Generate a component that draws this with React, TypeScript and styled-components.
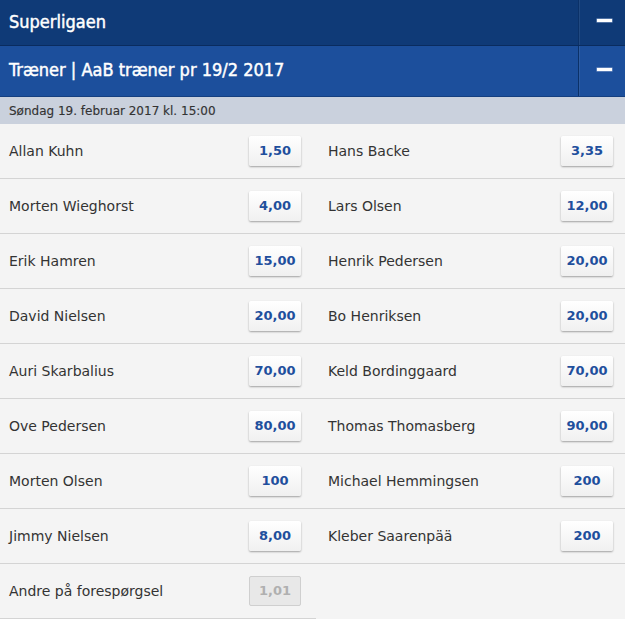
import React from "react";
import styled, { createGlobalStyle } from "styled-components";

const GlobalStyle = createGlobalStyle`
  html, body {
    margin: 0;
    padding: 0;
    background: #f4f4f4;
  }
  * {
    box-sizing: border-box;
  }
`;

const Page = styled.div`
  width: 625px;
  font-family: "DejaVu Sans", Verdana, sans-serif;
  color: #333;
`;

const Header = styled.div<{ $level: number }>`
  display: flex;
  align-items: stretch;
  height: ${(p) => (p.$level === 1 ? "46px" : "51px")};
  background: ${(p) => (p.$level === 1 ? "#0f3a77" : "#1c4f9c")};
  border-bottom: 1px solid ${(p) => (p.$level === 1 ? "#0a2c5f" : "#143f80")};
`;

const HeaderTitle = styled.div<{ $level: number }>`
  flex: 1;
  display: flex;
  align-items: center;
  padding: 0 0 ${(p) => (p.$level === 1 ? "2px" : "4px")} 9px;
  font-family: "DejaVu Sans Condensed", "DejaVu Sans", sans-serif;
  font-size: 18px;
  color: #fff;
  -webkit-text-stroke: 0.45px #fff;
`;

const Toggle = styled.div`
  width: 47px;
  display: flex;
  align-items: center;
  justify-content: center;
  padding-left: 4px;
  padding-bottom: 4px;
  border-left: 1px solid #0b3168;
  box-shadow: inset 1px 0 0 rgba(255, 255, 255, 0.08);
`;

const Minus = styled.span`
  display: block;
  width: 15px;
  height: 3px;
  background: #fff;
  box-shadow: 0 0 0 0.5px #8fa8d0;
`;

const DateBar = styled.div`
  height: 27px;
  display: flex;
  align-items: center;
  padding-left: 9px;
  background: #cad1dd;
  font-size: 12px;
  color: #333;
  -webkit-text-stroke: 0.15px #333;
`;

const Grid = styled.div`
  display: grid;
  grid-template-columns: 316px 309px;
`;

const Cell = styled.div<{ $side: "left" | "right" }>`
  height: 55px;
  display: flex;
  align-items: center;
  justify-content: space-between;
  padding: 0 ${(p) => (p.$side === "left" ? "15px 0 9px" : "12px 0 12px")};
  border-bottom: 1px solid #d4d4d4;
  background: #f4f4f4;
`;

const Name = styled.span`
  font-size: 14px;
  color: #333;
  padding-bottom: 1px;
`;

const Odds = styled.button<{ $disabled?: boolean }>`
  width: 52px;
  height: 30px;
  margin-bottom: 1px;
  padding: 0;
  font-family: "DejaVu Sans", Verdana, sans-serif;
  font-weight: bold;
  font-size: 13px;
  border-radius: 2px;
  cursor: pointer;
  color: ${(p) => (p.$disabled ? "#b0b0b0" : "#1f4f9d")};
  background: ${(p) =>
    p.$disabled ? "#e8e8e8" : "linear-gradient(#ffffff, #f0f0f0)"};
  border: ${(p) => (p.$disabled ? "1px solid #cfcfcf" : "none")};
  box-shadow: ${(p) =>
    p.$disabled ? "none" : "0 1px 2px rgba(0, 0, 0, 0.35)"};
`;

type Pick = { name: string; odds: string; disabled?: boolean };

const picks: Pick[] = [
  { name: "Allan Kuhn", odds: "1,50" },
  { name: "Hans Backe", odds: "3,35" },
  { name: "Morten Wieghorst", odds: "4,00" },
  { name: "Lars Olsen", odds: "12,00" },
  { name: "Erik Hamren", odds: "15,00" },
  { name: "Henrik Pedersen", odds: "20,00" },
  { name: "David Nielsen", odds: "20,00" },
  { name: "Bo Henriksen", odds: "20,00" },
  { name: "Auri Skarbalius", odds: "70,00" },
  { name: "Keld Bordinggaard", odds: "70,00" },
  { name: "Ove Pedersen", odds: "80,00" },
  { name: "Thomas Thomasberg", odds: "90,00" },
  { name: "Morten Olsen", odds: "100" },
  { name: "Michael Hemmingsen", odds: "200" },
  { name: "Jimmy Nielsen", odds: "8,00" },
  { name: "Kleber Saarenpää", odds: "200" },
  { name: "Andre på forespørgsel", odds: "1,01", disabled: true },
];

export default function App() {
  return (
    <Page>
      <GlobalStyle />
      <Header $level={1}>
        <HeaderTitle $level={1}>Superligaen</HeaderTitle>
        <Toggle>
          <Minus />
        </Toggle>
      </Header>
      <Header $level={2}>
        <HeaderTitle $level={2}>Træner | AaB træner pr 19/2 2017</HeaderTitle>
        <Toggle>
          <Minus />
        </Toggle>
      </Header>
      <DateBar>Søndag 19. februar 2017 kl. 15:00</DateBar>
      <Grid>
        {picks.map((p, i) => (
          <Cell key={p.name} $side={i % 2 === 0 ? "left" : "right"}>
            <Name>{p.name}</Name>
            <Odds $disabled={p.disabled}>{p.odds}</Odds>
          </Cell>
        ))}
      </Grid>
    </Page>
  );
}
